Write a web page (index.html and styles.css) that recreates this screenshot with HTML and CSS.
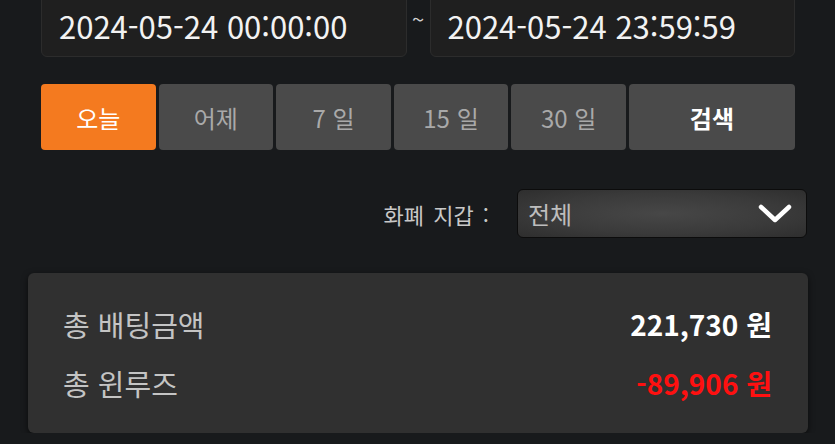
FILE: index.html
```html
<!DOCTYPE html>
<html lang="ko">
<head>
    <meta charset="UTF-8">
    <meta name="viewport" content="width=device-width, initial-scale=1.0">
    <title>베팅 내역</title>
    <link rel="stylesheet" href="styles.css">
</head>
<body>
    <div class="page">
        <div class="date-range">
            <div class="date-input">2024-05-24 00:00:00</div>
            <span class="tilde">~</span>
            <div class="date-input">2024-05-24 23:59:59</div>
        </div>

        <div class="period-buttons">
            <button class="period-btn active">오늘</button>
            <button class="period-btn">어제</button>
            <button class="period-btn">7 일</button>
            <button class="period-btn">15 일</button>
            <button class="period-btn">30 일</button>
            <button class="period-btn search-btn">검색</button>
        </div>

        <div class="wallet-row">
            <span class="wallet-label">화폐 지갑 :</span>
            <div class="wallet-select">
                <span>전체</span>
                <svg class="chevron" width="34" height="20" viewBox="0 0 34 20">
                    <path d="M3 3 L17 16 L31 3" fill="none" stroke="#fff" stroke-width="4.5" stroke-linecap="round" stroke-linejoin="round"/>
                </svg>
            </div>
        </div>

        <div class="summary">
            <div class="summary-row">
                <span class="summary-label">총 배팅금액</span>
                <span class="summary-value">221,730 원</span>
            </div>
            <div class="summary-row">
                <span class="summary-label">총 윈루즈</span>
                <span class="summary-value negative">-89,906 원</span>
            </div>
        </div>
    </div>
</body>
</html>
```

FILE: styles.css
```css
body {
    margin: 0;
    padding: 0;
    background-color: #181a1c;
    color: #e0e0e0;
    font-family: "Noto Sans CJK KR", "Noto Sans", sans-serif;
}

.date-range {
    display: grid;
    grid-template-columns: 1fr 23px 1fr;
    align-items: center;
    margin: -20px 40px 0 41px;
}

.date-input {
    height: 77px;
    display: flex;
    align-items: center;
    padding: 14px 0 0 17px;
    box-sizing: border-box;
    background-color: #1f1f1f;
    border: 1px solid #2c2c2c;
    border-radius: 6px;
    font-size: 31px;
    color: #f2f2f2;
}

.tilde {
    text-align: center;
    font-size: 22px;
    color: #d0d0d0;
    padding-bottom: 2px;
}

.period-buttons {
    display: flex;
    gap: 3px;
    margin: 27px 40px 0 41px;
}

.period-btn {
    flex: 1;
    height: 66px;
    border: none;
    border-radius: 4px;
    background-color: #4a4a4a;
    color: #a9a9a9;
    font-family: "Noto Sans CJK KR", "Noto Sans", sans-serif;
    font-size: 24px;
    padding: 0;
}

.period-btn.active {
    background-color: #f47a1f;
    color: #fff;
}

.search-btn {
    flex: 1.45;
    color: #fff;
    font-weight: 700;
}

.wallet-row {
    display: flex;
    justify-content: flex-end;
    align-items: center;
    gap: 28px;
    margin: 39px 28px 0 0;
}

.wallet-label {
    font-size: 22px;
    color: #c8c8c8;
    word-spacing: 3px;
}

.wallet-select {
    width: 290px;
    height: 49px;
    box-sizing: border-box;
    display: flex;
    align-items: center;
    justify-content: space-between;
    padding: 0 14px 0 10px;
    background: radial-gradient(ellipse at center, #474747 0%, #3a3a3a 60%, #2e2e2e 100%);
    border: 1px solid #0c0c0c;
    border-radius: 6px;
    font-size: 24px;
    color: #bdbdbd;
}

.summary {
    margin: 35px 27px 0 28px;
    height: 160px;
    box-sizing: border-box;
    padding: 29px 36px 0 35px;
    background-color: #303030;
    border-radius: 6px;
    box-shadow: 0 2px 6px rgba(0, 0, 0, 0.6);
}

.summary-row {
    display: flex;
    justify-content: space-between;
    align-items: center;
    height: 44px;
    margin-bottom: 15px;
}

.summary-label {
    font-size: 29px;
    color: #c4c4c4;
}

.summary-value {
    font-size: 28px;
    font-weight: 700;
    color: #fff;
}

.summary-value.negative {
    color: #ff1010;
}
```
